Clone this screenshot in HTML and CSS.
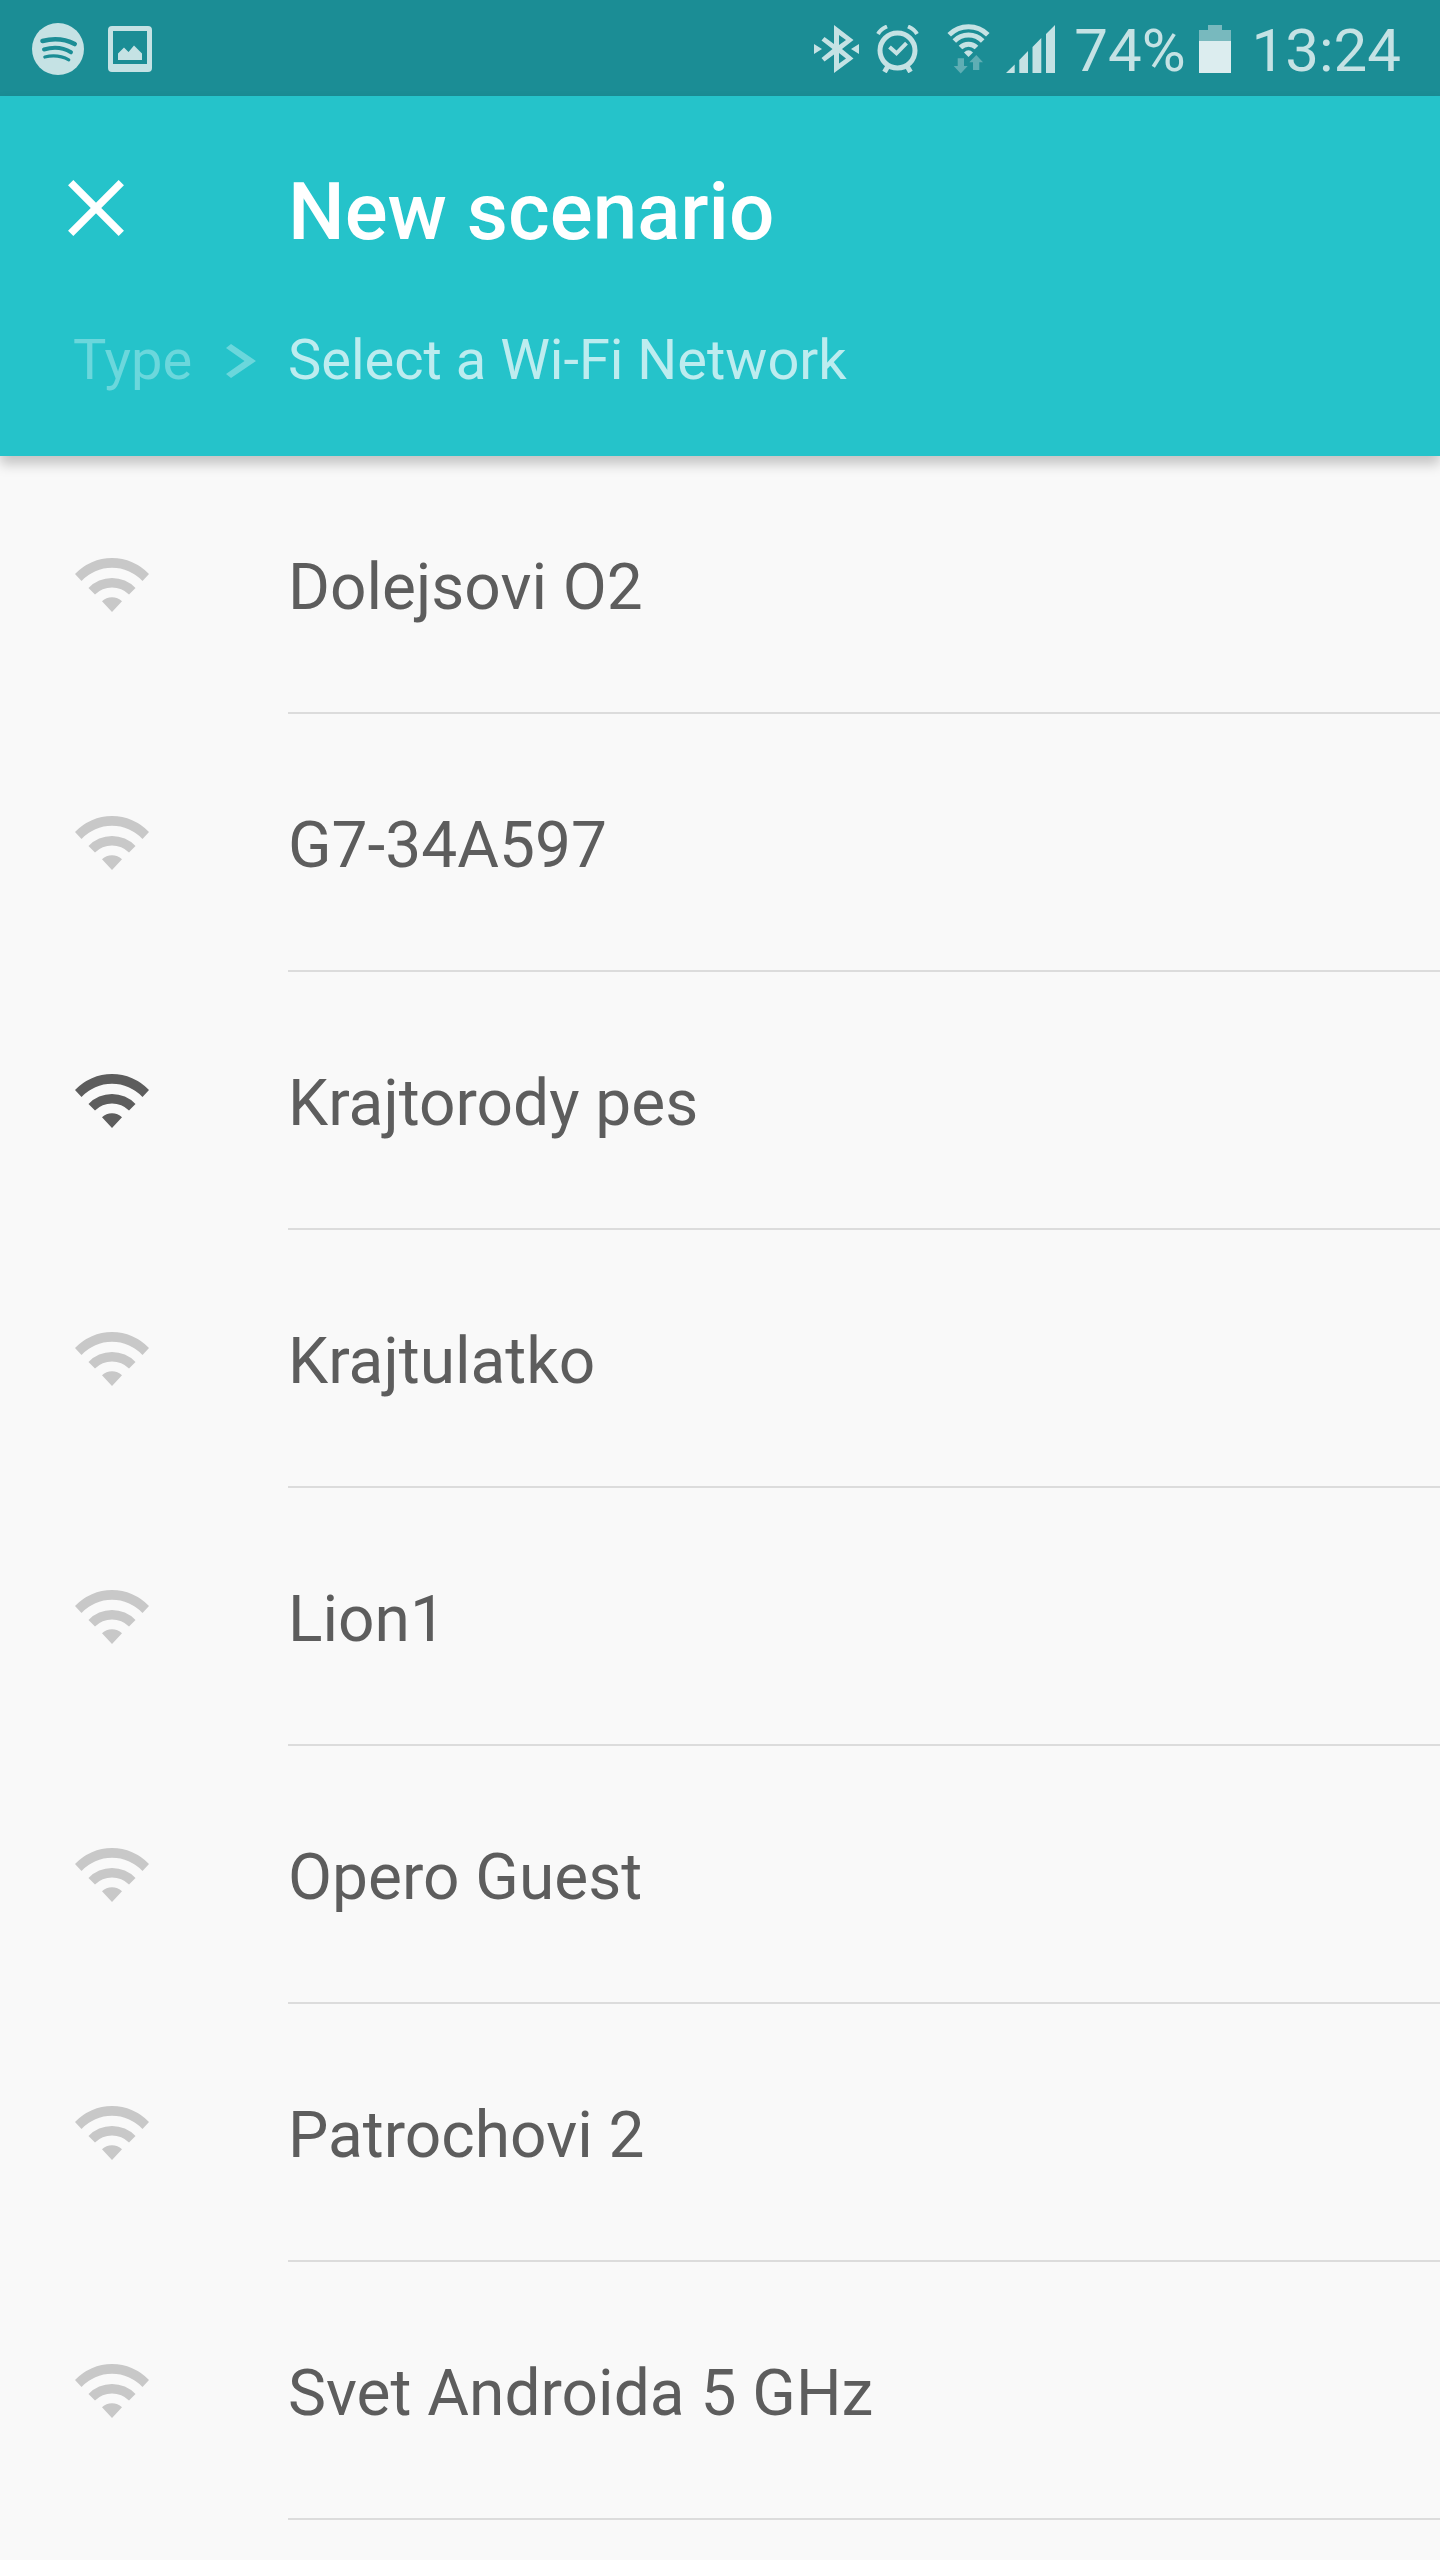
FILE: index.html
```html
<!DOCTYPE html>
<html lang="en">
<head>
<meta charset="utf-8">
<meta name="viewport" content="width=device-width, initial-scale=1">
<title>New scenario</title>
<link rel="stylesheet" href="styles.css">
</head>
<body>
<svg width="0" height="0" class="defs" aria-hidden="true">
  <symbol id="wifi" viewBox="0 0 74 54">
    <path d="M0 16A51 51 0 0 1 74 16L67.500 23A42 42 0 0 0 6.500 23ZM13.500 30A32.500 32.500 0 0 1 60.500 30L54 36.500A24 24 0 0 0 20 36.500ZM27 43.300A14.500 14.500 0 0 1 47 43.300L37 54Z"/>
  </symbol>
</svg>

<div class="status">
  <div class="status-left">
    <svg width="52" height="52" viewBox="0 0 52 52" role="img" aria-label="Spotify">
      <circle cx="26" cy="26" r="26" fill="#c5e2e4"/>
      <g fill="none" stroke="#1b8d95" stroke-linecap="round">
        <path stroke-width="4.600" d="M10.500 18Q28 13.500 42.700 21"/>
        <path stroke-width="4" d="M12 26.500Q27 22 39 29.300"/>
        <path stroke-width="3.200" d="M12.800 34Q26 31 36.800 36.800"/>
      </g>
    </svg>
    <svg width="44" height="46" viewBox="0 0 44 46" role="img" aria-label="Screenshot">
      <path fill="#c5e2e4" fill-rule="evenodd" d="M4 0H40Q44 0 44 4V42Q44 46 40 46H4Q0 46 0 42V4Q0 0 4 0ZM5 5V38H39V5ZM10 34V27.500L16 21.500L20.500 26L26 19.500L34 27.500V34Z"/>
    </svg>
  </div>
  <div class="status-right">
    <svg width="49" height="48" viewBox="814 25 49 48" role="img" aria-label="Bluetooth connected">
      <path fill="#c5e2e4" fill-rule="evenodd" d="M834 25L853.500 40L842 49L853.500 58.500L834 73V54.500L824.500 61.500L821.500 58L832.500 49L821.500 40.500L824.500 37L834 44ZM839 35V45L846 40ZM839 53V63.500L846 58.500ZM814 44L822 49L814 54ZM859 44L851 49L859 54Z"/>
    </svg>
    <svg width="50" height="48" viewBox="875 25 50 48" role="img" aria-label="Alarm set">
      <g fill="none" stroke="#c5e2e4" stroke-width="4">
        <circle cx="897.500" cy="50.500" r="17.500" stroke-width="5"/>
        <path d="M889.500 47L896.500 53.300L906.500 43.200M878 34Q881 29 887 26.500M917 34Q914 29 908 26.500"/>
        <path stroke-width="5" d="M888 66L884.500 72M907 66L910.500 72"/>
      </g>
    </svg>
    <svg width="57" height="50" viewBox="937 24 57 50" role="img" aria-label="Wi-Fi active">
      <g fill="none" stroke="#c5e2e4" stroke-width="5">
        <path d="M949.200 34.800A27.200 27.200 0 0 1 987.800 34.800M954.300 41A20 20 0 0 1 982.700 41M960.500 47.500A11.300 11.300 0 0 1 976.500 47.500"/>
      </g>
      <path fill="#c5e2e4" d="M964 52.500Q968.500 48 973 52.500L968.500 57Z"/>
      <path fill="#5faeb4" d="M957.700 58.300H964V66H967.700L960.700 73.500L953.700 66H957.700ZM976.300 55L983 62.300H979.300V70H973V62.300H969.300Z"/>
    </svg>
    <svg width="56" height="48" viewBox="1006 25 56 48" role="img" aria-label="Mobile signal">
      <path fill="#c5e2e4" d="M1006 73L1014.700 64.500V73ZM1019.300 73V60L1028 51V73ZM1032.500 73V47L1041.300 38V73ZM1046 73V34L1055 25V73Z"/>
    </svg>
    <span>74%</span>
    <svg width="42" height="48" viewBox="1198 25 42 48" role="img" aria-label="Battery">
      <path fill="#78b9be" d="M1199 41V30H1208V25H1222V30H1231V41Z"/>
      <path fill="#dcedef" d="M1199 41H1231V73H1199Z"/>
    </svg>
    <time>13:24</time>
  </div>
</div>

<header class="appbar">
  <div class="titlebar">
    <button class="close" type="button" aria-label="Close">
      <svg width="56" height="56" viewBox="0 0 56 56" aria-hidden="true"><path d="M2.700 2.700L53.300 53.300M53.300 2.700L2.700 53.300" stroke="#fff" stroke-width="7.500"/></svg>
    </button>
    <h1>New scenario</h1>
  </div>
  <nav class="crumbs" aria-label="Steps">
    <div class="previous">
      <a href="#type">Type</a>
      <svg width="30" height="34" viewBox="0 0 30 34" aria-hidden="true"><path fill="#6bd7dc" d="M5 0L30 17L5 34L0 30L18.500 17L0 4Z"/></svg>
    </div>
    <span class="current" aria-current="step">Select a Wi-Fi Network</span>
  </nav>
</header>

<main>
  <ul class="networks">
    <li><button type="button"><svg class="signal" aria-hidden="true"><use href="#wifi"/></svg><span>Dolejsovi O2</span></button></li>
    <li><button type="button"><svg class="signal" aria-hidden="true"><use href="#wifi"/></svg><span>G7-34A597</span></button></li>
    <li><button type="button"><svg class="signal in-range" aria-hidden="true"><use href="#wifi"/></svg><span>Krajtorody pes</span></button></li>
    <li><button type="button"><svg class="signal" aria-hidden="true"><use href="#wifi"/></svg><span>Krajtulatko</span></button></li>
    <li><button type="button"><svg class="signal" aria-hidden="true"><use href="#wifi"/></svg><span>Lion1</span></button></li>
    <li><button type="button"><svg class="signal" aria-hidden="true"><use href="#wifi"/></svg><span>Opero Guest</span></button></li>
    <li><button type="button"><svg class="signal" aria-hidden="true"><use href="#wifi"/></svg><span>Patrochovi 2</span></button></li>
    <li><button type="button"><svg class="signal" aria-hidden="true"><use href="#wifi"/></svg><span>Svet Androida 5 GHz</span></button></li>
  </ul>
</main>
</body>
</html>
```

FILE: styles.css
```css
* {
  box-sizing: border-box;
}

body {
  margin: 0;
  min-height: 100vh;
  background: #f9f9f9;
  color: #5d5d5d;
  font-family: Roboto, "Liberation Sans", sans-serif;
}

svg {
  display: block;
  flex: none;
}

.defs {
  position: absolute;
}

button {
  border: 0;
  padding: 0;
  background: none;
  color: inherit;
  font: inherit;
  text-align: left;
  cursor: pointer;
}

.status {
  display: flex;
  align-items: center;
  justify-content: space-between;
  height: 96px;
  padding: 2px 39px 0 32px;
  background: #1b8d95;
  color: #c5e2e4;
  font-size: 60px;
  line-height: 72px;
}

.status-left {
  display: flex;
  align-items: center;
  gap: 24px;
}

.status-right {
  display: flex;
  align-items: center;
  gap: 12px;
}

.status-right span,
.status-right time {
  padding-top: 4px;
}

.appbar {
  position: relative;
  z-index: 1;
  padding: 64px 0 62px;
  background: #25c3ca;
  box-shadow: 0 8px 12px rgba(0, 0, 0, 0.22);
}

.titlebar {
  display: flex;
  align-items: center;
}

.close {
  width: 288px;
  padding: 16px 68px 24px;
}

h1 {
  margin: 0;
  color: #fff;
  font-size: 80px;
  font-weight: 500;
  line-height: 104px;
}

.crumbs {
  display: flex;
  align-items: center;
  padding-top: 63px;
  font-size: 56px;
  line-height: 67px;
}

.previous {
  display: flex;
  align-items: center;
  justify-content: space-between;
  width: 288px;
  padding: 0 32px 0 73px;
}

.previous a {
  color: #6bd7dc;
  text-decoration: none;
}

.current {
  color: #bdecef;
}

.networks {
  margin: 0;
  padding: 0;
  list-style: none;
}

.networks button {
  display: flex;
  align-items: center;
  width: 100%;
  height: 258px;
  padding-left: 75px;
  font-size: 64px;
  line-height: 76px;
}

.networks span {
  display: flex;
  flex: 1;
  align-items: center;
  height: 258px;
  margin-left: 139px;
  padding-top: 8px;
  border-bottom: 2px solid #dcdcdc;
}

.signal {
  width: 74px;
  height: 54px;
  fill: #c8c8c8;
}

.in-range {
  fill: #5d5d5d;
}
```
